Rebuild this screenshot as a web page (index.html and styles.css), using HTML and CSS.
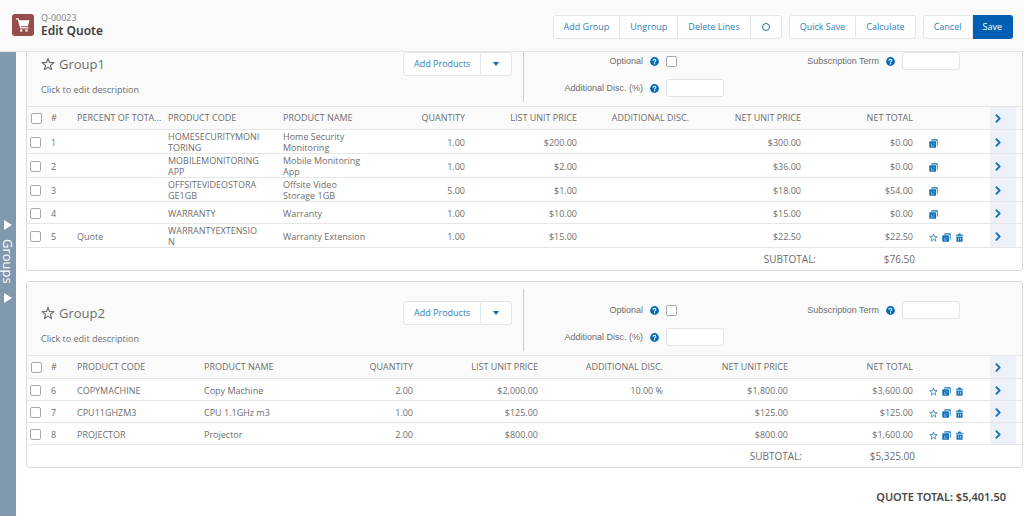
FILE: index.html
```html
<!DOCTYPE html>
<html lang="en">
<head>
<meta charset="utf-8">
<title>Edit Quote</title>
<link rel="stylesheet" href="styles.css">
</head>
<body>
<svg class="sprite" aria-hidden="true">
  <symbol id="star" viewBox="0 0 16 16"><path d="M8 1.600l1.700 4.700 5 .200-3.900 3.100 1.300 4.800L8 11.600l-4.100 2.800 1.300-4.800L1.300 6.500l5-.200z" fill="none" stroke="currentColor" stroke-width="1.300" stroke-linejoin="round"/></symbol>
  <symbol id="clone" viewBox="0 0 16 16"><path d="M5 .500h9.500q1 0 1 1v9.500q0 1-1 1H14V4q0-1.500-1.500-1.500H4V1.500q0-1 1-1z" fill="currentColor"/><path d="M2 4h9q1.500 0 1.500 1.500V14q0 1.500-1.500 1.500H2Q.500 15.500.500 14V5.500Q.500 4 2 4z" fill="currentColor"/><path d="M3.500 12.500h5M3.500 9.500h2M7.500 8.500h2" stroke="#fff" stroke-width="1"/></symbol>
  <symbol id="trash" viewBox="0 0 16 16"><path d="M1.500 3h4V2q0-1 1-1h3q1 0 1 1v1h4v2h-13zM2.500 6.200h11V14q0 1.500-1.500 1.500H4Q2.500 15.500 2.500 14z" fill="currentColor"/><path d="M6.200 8.200v5M9.800 8.200v5" stroke="#fff" stroke-width="1"/></symbol>
  <symbol id="chevron" viewBox="0 0 8 10"><path d="M2.500 2L5.500 5 2.500 8" fill="none" stroke="currentColor" stroke-width="1.700" stroke-linecap="round" stroke-linejoin="round"/></symbol>
  <symbol id="help" viewBox="0 0 16 16"><circle cx="8" cy="8" r="7.800" fill="currentColor"/><path d="M5.500 6.300C5.500 4.600 6.600 3.800 8 3.800s2.500.900 2.500 2.200c0 1.700-2.400 1.800-2.400 3.500" fill="none" stroke="#fff" stroke-width="1.800" stroke-linecap="round"/><circle cx="8.100" cy="12" r="1.200" fill="#fff"/></symbol>
  <symbol id="cart" viewBox="0 0 22 22"><path d="M6.500 6.300h11l-1.600 5.900H8.400z" fill="#fff"/><path d="M4.500 4.800h1.700l2.500 9h7.200" fill="none" stroke="#fff" stroke-width="1.300" stroke-linecap="round" stroke-linejoin="round"/><circle cx="9.200" cy="16.500" r="1.200" fill="#fff"/><circle cx="14.500" cy="16.500" r="1.200" fill="#fff"/></symbol>
</svg>

<header class="topbar">
  <div class="brand">
    <span class="logo"><svg><use href="#cart"/></svg></span>
    <div>
      <p class="record">Q-00023</p>
      <h1 class="title">Edit Quote</h1>
    </div>
  </div>
  <div class="actions">
    <div class="btn-group">
      <button class="btn">Add Group</button><button class="btn">Ungroup</button><button class="btn">Delete Lines</button><button class="btn" aria-label="Settings"><span class="ring"></span></button>
    </div>
    <div class="btn-group"><button class="btn">Quick Save</button><button class="btn">Calculate</button></div>
    <div class="btn-group"><button class="btn">Cancel</button><button class="btn btn-primary">Save</button></div>
  </div>
</header>

<div class="workspace">
  <button class="rail"><span class="tri"></span><span class="rail-label">Groups</span><span class="tri"></span></button>
  <main class="content">

    <section class="panel panel-scrolled">
      <div class="group-head">
        <div class="group-info">
          <h2 class="group-name"><svg class="name-star"><use href="#star"/></svg>Group1</h2>
          <p class="group-desc">Click to edit description</p>
        </div>
        <div class="btn-group add-products"><button class="btn">Add Products</button><button class="btn btn-menu" aria-label="More"><span class="caret"></span></button></div>
        <div class="fields">
          <div class="field"><label for="opt1">Optional</label><svg class="help"><use href="#help"/></svg><span class="slot"><input class="check" id="opt1" type="checkbox"></span></div>
          <div class="field"><label for="term1">Subscription Term</label><svg class="help"><use href="#help"/></svg><span class="slot"><input class="text" id="term1" type="text"></span></div>
          <div class="field"><label for="disc1">Additional Disc. (%)</label><svg class="help"><use href="#help"/></svg><span class="slot"><input class="text" id="disc1" type="text"></span></div>
        </div>
      </div>
      <table class="lines">
        <colgroup><col class="c-check"><col class="c-num"><col class="c-percent"><col class="c-code"><col><col class="c-qty"><col class="c-money"><col class="c-money"><col class="c-money"><col class="c-money"><col class="c-tools"><col class="c-more"><col class="c-end"></colgroup>
        <thead><tr><th><input class="check" type="checkbox" aria-label="Select all"></th><th>#</th><th>PERCENT OF TOTA...</th><th>PRODUCT CODE</th><th>PRODUCT NAME</th><th class="num">QUANTITY</th><th class="num">LIST UNIT PRICE</th><th class="num">ADDITIONAL DISC.</th><th class="num">NET UNIT PRICE</th><th class="num">NET TOTAL</th><th></th><th class="more"><button class="icon" aria-label="Expand"><svg class="chev"><use href="#chevron"/></svg></button></th><th></th></tr></thead>
        <tbody>
          <tr><td><input class="check" type="checkbox" aria-label="Line 1"></td><td>1</td><td></td><td class="code">HOMESECURITYMONI<wbr>TORING</td><td class="name">Home Security Monitoring</td><td class="num">1.00</td><td class="num">$200.00</td><td></td><td class="num">$300.00</td><td class="num">$0.00</td><td class="tools"><button class="icon" aria-label="Clone"><svg><use href="#clone"/></svg></button></td><td class="more"><button class="icon" aria-label="Details"><svg class="chev"><use href="#chevron"/></svg></button></td><td></td></tr>
          <tr><td><input class="check" type="checkbox" aria-label="Line 2"></td><td>2</td><td></td><td class="code">MOBILEMONITORING<wbr>APP</td><td class="name">Mobile Monitoring App</td><td class="num">1.00</td><td class="num">$2.00</td><td></td><td class="num">$36.00</td><td class="num">$0.00</td><td class="tools"><button class="icon" aria-label="Clone"><svg><use href="#clone"/></svg></button></td><td class="more"><button class="icon" aria-label="Details"><svg class="chev"><use href="#chevron"/></svg></button></td><td></td></tr>
          <tr><td><input class="check" type="checkbox" aria-label="Line 3"></td><td>3</td><td></td><td class="code">OFFSITEVIDEOSTORA<wbr>GE1GB</td><td class="name">Offsite Video Storage 1GB</td><td class="num">5.00</td><td class="num">$1.00</td><td></td><td class="num">$18.00</td><td class="num">$54.00</td><td class="tools"><button class="icon" aria-label="Clone"><svg><use href="#clone"/></svg></button></td><td class="more"><button class="icon" aria-label="Details"><svg class="chev"><use href="#chevron"/></svg></button></td><td></td></tr>
          <tr><td><input class="check" type="checkbox" aria-label="Line 4"></td><td>4</td><td></td><td class="code">WARRANTY</td><td class="name">Warranty</td><td class="num">1.00</td><td class="num">$10.00</td><td></td><td class="num">$15.00</td><td class="num">$0.00</td><td class="tools"><button class="icon" aria-label="Clone"><svg><use href="#clone"/></svg></button></td><td class="more"><button class="icon" aria-label="Details"><svg class="chev"><use href="#chevron"/></svg></button></td><td></td></tr>
          <tr><td><input class="check" type="checkbox" aria-label="Line 5"></td><td>5</td><td>Quote</td><td class="code">WARRANTYEXTENSIO<wbr>N</td><td class="name">Warranty Extension</td><td class="num">1.00</td><td class="num">$15.00</td><td></td><td class="num">$22.50</td><td class="num">$22.50</td><td class="tools"><button class="icon" aria-label="Favorite"><svg><use href="#star"/></svg></button><button class="icon" aria-label="Clone"><svg><use href="#clone"/></svg></button><button class="icon" aria-label="Delete"><svg><use href="#trash"/></svg></button></td><td class="more"><button class="icon" aria-label="Details"><svg class="chev"><use href="#chevron"/></svg></button></td><td></td></tr>
        </tbody>
      </table>
      <div class="subtotal"><span>SUBTOTAL:</span><span class="subtotal-value">$76.50</span></div>
    </section>

    <section class="panel">
      <div class="group-head">
        <div class="group-info">
          <h2 class="group-name"><svg class="name-star"><use href="#star"/></svg>Group2</h2>
          <p class="group-desc">Click to edit description</p>
        </div>
        <div class="btn-group add-products"><button class="btn">Add Products</button><button class="btn btn-menu" aria-label="More"><span class="caret"></span></button></div>
        <div class="fields">
          <div class="field"><label for="opt2">Optional</label><svg class="help"><use href="#help"/></svg><span class="slot"><input class="check" id="opt2" type="checkbox"></span></div>
          <div class="field"><label for="term2">Subscription Term</label><svg class="help"><use href="#help"/></svg><span class="slot"><input class="text" id="term2" type="text"></span></div>
          <div class="field"><label for="disc2">Additional Disc. (%)</label><svg class="help"><use href="#help"/></svg><span class="slot"><input class="text" id="disc2" type="text"></span></div>
        </div>
      </div>
      <table class="lines">
        <colgroup><col class="c-check"><col class="c-num"><col class="c-code-wide"><col><col class="c-qty"><col class="c-wide"><col class="c-wide"><col class="c-wide"><col class="c-wide"><col class="c-tools"><col class="c-more"><col class="c-end"></colgroup>
        <thead><tr><th><input class="check" type="checkbox" aria-label="Select all"></th><th>#</th><th>PRODUCT CODE</th><th>PRODUCT NAME</th><th class="num">QUANTITY</th><th class="num">LIST UNIT PRICE</th><th class="num">ADDITIONAL DISC.</th><th class="num">NET UNIT PRICE</th><th class="num">NET TOTAL</th><th></th><th class="more"><button class="icon" aria-label="Expand"><svg class="chev"><use href="#chevron"/></svg></button></th><th></th></tr></thead>
        <tbody>
          <tr><td><input class="check" type="checkbox" aria-label="Line 6"></td><td>6</td><td>COPYMACHINE</td><td>Copy Machine</td><td class="num">2.00</td><td class="num">$2,000.00</td><td class="num">10.00 %</td><td class="num">$1,800.00</td><td class="num">$3,600.00</td><td class="tools"><button class="icon" aria-label="Favorite"><svg><use href="#star"/></svg></button><button class="icon" aria-label="Clone"><svg><use href="#clone"/></svg></button><button class="icon" aria-label="Delete"><svg><use href="#trash"/></svg></button></td><td class="more"><button class="icon" aria-label="Details"><svg class="chev"><use href="#chevron"/></svg></button></td><td></td></tr>
          <tr><td><input class="check" type="checkbox" aria-label="Line 7"></td><td>7</td><td>CPU11GHZM3</td><td>CPU 1.1GHz m3</td><td class="num">1.00</td><td class="num">$125.00</td><td></td><td class="num">$125.00</td><td class="num">$125.00</td><td class="tools"><button class="icon" aria-label="Favorite"><svg><use href="#star"/></svg></button><button class="icon" aria-label="Clone"><svg><use href="#clone"/></svg></button><button class="icon" aria-label="Delete"><svg><use href="#trash"/></svg></button></td><td class="more"><button class="icon" aria-label="Details"><svg class="chev"><use href="#chevron"/></svg></button></td><td></td></tr>
          <tr><td><input class="check" type="checkbox" aria-label="Line 8"></td><td>8</td><td>PROJECTOR</td><td>Projector</td><td class="num">2.00</td><td class="num">$800.00</td><td></td><td class="num">$800.00</td><td class="num">$1,600.00</td><td class="tools"><button class="icon" aria-label="Favorite"><svg><use href="#star"/></svg></button><button class="icon" aria-label="Clone"><svg><use href="#clone"/></svg></button><button class="icon" aria-label="Delete"><svg><use href="#trash"/></svg></button></td><td class="more"><button class="icon" aria-label="Details"><svg class="chev"><use href="#chevron"/></svg></button></td><td></td></tr>
        </tbody>
      </table>
      <div class="subtotal"><span>SUBTOTAL:</span><span class="subtotal-value subtotal-wide">$5,325.00</span></div>
    </section>

    <p class="total">QUOTE TOTAL: $5,401.50</p>
  </main>
</div>
</body>
</html>
```

FILE: styles.css
```css
* { box-sizing: border-box; }
html, body { height: 100%; }
body {
  margin: 0;
  display: flex;
  flex-direction: column;
  overflow: hidden;
  background: #fff;
  color: #6e6e6e;
  font: 9px/12px "Open Sans", "Noto Sans", sans-serif;
}
h1, h2, p { margin: 0; }
.sprite { position: absolute; width: 0; height: 0; }
button, input { margin: 0; font: inherit; }

.topbar {
  flex: none;
  display: flex;
  align-items: center;
  justify-content: space-between;
  height: 52px;
  padding: 2px 11px 0 12px;
  background: #fafafa;
  border-bottom: 1px solid #e4e4e4;
}
.brand { display: flex; align-items: center; gap: 7px; padding-bottom: 4px; }
.logo { width: 22px; height: 22px; border-radius: 3px; background: #954c4c; }
.logo svg { display: block; width: 22px; height: 22px; }
.record { color: #8a8a8a; font-family: "Noto Sans", sans-serif; }
.title { color: #3e3e3e; font-family: "Noto Sans", sans-serif; font-size: 12px; line-height: 14px; font-weight: 600; }
.actions { display: flex; gap: 7px; }

.btn-group { display: flex; }
.btn {
  height: 24px;
  padding: 0 10px;
  border: 1px solid #e6e6e6;
  border-left-width: 0;
  background: #fff;
  color: #2f82bb;
  display: flex;
  align-items: center;
  white-space: nowrap;
}
.btn:first-child { border-left-width: 1px; border-radius: 3px 0 0 3px; }
.btn:last-child { border-radius: 0 3px 3px 0; }
.btn-primary { background: #005fb2; border-color: #005fb2; color: #fff; }
.ring { width: 8px; height: 8px; margin: 0 1px; border: 1px solid #1673b1; border-radius: 50%; }
.btn-menu { padding: 0 11px; }
.caret { border: 3px solid transparent; border-top: 4px solid #0b6cb3; border-bottom: 0; margin: 0 1px; }

.workspace { flex: 1; display: flex; min-height: 0; }
.rail {
  flex: none;
  width: 16px;
  padding: 0 1px 45px 0;
  border: 0;
  background: #8199af;
  color: #fff;
  display: flex;
  flex-direction: column;
  align-items: center;
  justify-content: center;
  gap: 9px;
}
.rail-label { writing-mode: vertical-rl; font-size: 13px; line-height: 15px; }
.tri { border: 5px solid transparent; border-left: 8px solid #fff; border-right: 0; }
.content { flex: 1; min-width: 0; overflow: hidden; padding: 0 1px 0 10px; }

.panel { border: 1px solid #dadada; border-radius: 3px; margin-bottom: 10px; background: #fff; }
.panel-scrolled { margin-top: -20px; }
.group-head { display: flex; height: 73px; padding: 7px 14px 4px; background: #fafafa; border-radius: 3px 3px 0 0; }
.group-info { width: 362px; padding-top: 15px; }
.group-name { display: flex; align-items: center; gap: 4px; font-size: 13px; line-height: 18px; font-weight: 400; }
.name-star { width: 14px; height: 14px; }
.group-desc { margin-top: 11px; }
.add-products { width: 120px; padding-top: 12px; }
.fields {
  flex: 1;
  border-left: 1px solid #c3cfdc;
  display: grid;
  grid-template-columns: 200px 236px;
  align-content: start;
  row-gap: 9px;
  padding-top: 12px;
  font-family: "Liberation Sans", Arial, sans-serif;
}
.field { display: grid; grid-template-columns: 1fr 9px 58px; align-items: center; column-gap: 7px; height: 18px; text-align: right; white-space: nowrap; }
.slot { display: flex; }
.help { width: 9px; height: 9px; color: #0069b8; }
.text { width: 58px; height: 18px; padding: 0 4px; border: 1px solid #e4e4e4; border-radius: 3px; background: #fff; }
.check { appearance: none; display: block; width: 11px; height: 11px; border: 1px solid #a8a8a8; border-radius: 2px; background: #fff; }

.lines { width: 100%; table-layout: fixed; border-collapse: separate; border-spacing: 0; }
.lines th, .lines td { padding: 0; border-bottom: 1px solid #e6e6e6; vertical-align: middle; text-align: left; font-weight: 400; }
.lines td { height: 22px; padding-top: 1px; line-height: 11px; }
.lines th { height: 24px; background: #fafafa; border-top: 1px solid #e6e6e6; white-space: nowrap; }
.lines .check { margin-left: 3px; }
.lines th .check { margin-left: 4px; }
.lines .num { text-align: right; }
.lines .code { padding-right: 21px; }
.lines .name { padding-right: 14px; }
.lines .tools { padding-left: 16px; white-space: nowrap; }
.lines .more { background: #edf1f7; padding-left: 3px; }
.c-check { width: 24px; }
.c-num { width: 26px; }
.c-percent { width: 91px; }
.c-code { width: 115px; }
.c-code-wide { width: 127px; }
.c-qty { width: 84px; }
.c-money { width: 112px; }
.c-wide { width: 125px; }
.c-tools { width: 77px; }
.c-more { width: 26px; }
.c-end { width: 6px; }
.icon { display: inline-flex; padding: 0; margin-right: 4px; border: 0; background: none; color: #1473b8; vertical-align: middle; }
.icon svg { display: block; width: 9px; height: 9px; }
.icon .chev { width: 10px; height: 11px; }

.subtotal { display: flex; justify-content: flex-end; padding: 5px 107px 4px 0; font-size: 10px; line-height: 13px; }
.subtotal-value { width: 99px; text-align: right; }
.subtotal-wide { width: 113px; }
.total { margin: 21px 17px 0 0; text-align: right; color: #4a4a4a; font-family: "Noto Sans", sans-serif; font-size: 11px; line-height: 16px; font-weight: 600; }
```
